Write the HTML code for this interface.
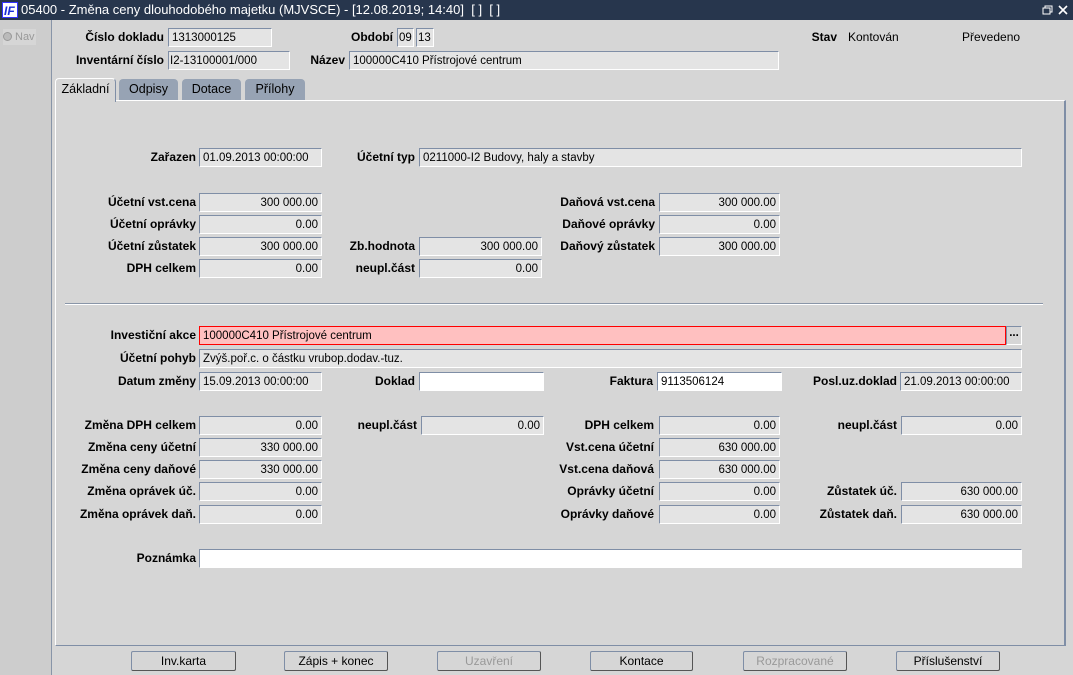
<!DOCTYPE html>
<html><head><meta charset="utf-8">
<style>
*{box-sizing:border-box;margin:0;padding:0}
body{width:1073px;height:675px;background:#d6d6d6;font-family:"Liberation Sans",Arial,sans-serif;font-size:12px;color:#000;position:relative;overflow:hidden}
.a{position:absolute}
.t{position:absolute;left:0;top:0;width:1073px;height:20px;background:#27364d;color:#fff;font-size:13px;line-height:20px}
.f{position:absolute;height:19px;background:#e4e4e4;border-top:1px solid #7f8ea6;border-left:1px solid #7f8ea6;border-right:1px solid #fff;border-bottom:1px solid #fff;line-height:18px;padding:0 3px;white-space:nowrap;overflow:hidden;font-size:11.5px}
.r{text-align:right}
.w{background:#fff}
.l{position:absolute;font-weight:bold;text-align:right;line-height:19px;white-space:nowrap}
.tab{position:absolute;top:79px;height:21px;background:#97a3b4;border-radius:4px 4px 0 0;font-size:12.5px;text-align:center;line-height:21px}
.b{position:absolute;top:651px;height:20px;border:1px solid #7f8ea6;border-right-color:#555;border-bottom-color:#555;background:#d6d6d6;text-align:center;line-height:18px;border-radius:2px}
.dis{color:#999}
</style></head><body>
<div class="t">
 <div class="a" style="left:2px;top:2px;width:16px;height:16px;background:#fff;border:1px solid #33f"><span style="color:#1a2fd8;font-weight:bold;font-style:italic;font-size:12px;position:absolute;left:1px;top:-2px">IF</span></div>
 <span class="a" style="left:21px;top:0">05400 - Změna ceny dlouhodobého majetku (MJVSCE) - [12.08.2019; 14:40]&nbsp; [ ]&nbsp; [ ]</span>
 <svg class="a" style="left:1042px;top:4px" width="28" height="12"><rect x="1" y="4" width="7" height="6" fill="none" stroke="#fff"/><path d="M3 4V2h7v6H8" fill="none" stroke="#fff"/><path d="M17 2l8 8M25 2l-8 8" stroke="#fff" stroke-width="1.6"/></svg>
</div>
<div class="a" style="left:0;top:20px;width:52px;height:655px;background:#cdcdcd;border-right:1px solid #8895a8"></div>
<div class="a" style="left:3px;top:29px;width:33px;height:16px;background:#d6d6d6;color:#999;font-size:11px;line-height:16px"><span style="display:inline-block;width:9px;height:9px;border-radius:50%;background:#bbb;border:1px solid #999;vertical-align:-1px;margin-right:3px"></span>Nav</div>

<div class="l" style="right:909px;top:28px">Číslo dokladu</div>
<div class="f" style="left:168px;top:28px;width:104px">1313000125</div>
<div class="l" style="right:680px;top:28px">Období</div>
<div class="f" style="left:397px;top:28px;width:17px;padding:0 1px">09</div>
<div class="f" style="left:416px;top:28px;width:18px;padding:0 1px">13</div>
<div class="l" style="right:236px;top:28px">Stav</div>
<div class="a" style="left:848px;top:28px;line-height:19px">Kontován</div>
<div class="a" style="left:962px;top:28px;line-height:19px">Převedeno</div>
<div class="l" style="right:909px;top:51px">Inventární číslo</div>
<div class="f" style="left:168px;top:51px;width:122px;padding-left:1px">I2-13100001/000</div>
<div class="l" style="right:728px;top:51px">Název</div>
<div class="f" style="left:349px;top:51px;width:430px">100000C410 Přístrojové centrum</div>

<div class="a" style="left:55px;top:100px;width:1011px;height:546px;border-top:1px solid #fff;border-left:1px solid #fff;border-right:2px solid #7f8ea6;border-bottom:1px solid #7f8ea6"></div>
<div class="tab" style="left:55px;top:78px;width:61px;height:24px;background:#d6d6d6;border:1px solid #fff;border-bottom:none;border-right-color:#7f8ea6">Základní</div>
<div class="tab" style="left:119px;width:59px">Odpisy</div>
<div class="tab" style="left:182px;width:59px">Dotace</div>
<div class="tab" style="left:245px;width:60px">Přílohy</div>

<div class="l" style="right:877px;top:148px">Zařazen</div>
<div class="f" style="left:199px;top:148px;width:123px">01.09.2013 00:00:00</div>
<div class="l" style="right:658px;top:148px">Účetní typ</div>
<div class="f" style="left:419px;top:148px;width:603px">0211000-I2 Budovy, haly a stavby</div>

<div class="l" style="right:877px;top:193px">Účetní vst.cena</div><div class="f r" style="left:199px;top:193px;width:123px">300 000.00</div>
<div class="l" style="right:877px;top:215px">Účetní oprávky</div><div class="f r" style="left:199px;top:215px;width:123px">0.00</div>
<div class="l" style="right:877px;top:237px">Účetní zůstatek</div><div class="f r" style="left:199px;top:237px;width:123px">300 000.00</div>
<div class="l" style="right:877px;top:259px">DPH celkem</div><div class="f r" style="left:199px;top:259px;width:123px">0.00</div>
<div class="l" style="right:658px;top:237px">Zb.hodnota</div><div class="f r" style="left:419px;top:237px;width:123px">300 000.00</div>
<div class="l" style="right:658px;top:259px">neupl.část</div><div class="f r" style="left:419px;top:259px;width:123px">0.00</div>
<div class="l" style="right:418px;top:193px">Daňová vst.cena</div><div class="f r" style="left:659px;top:193px;width:121px">300 000.00</div>
<div class="l" style="right:418px;top:215px">Daňové oprávky</div><div class="f r" style="left:659px;top:215px;width:121px">0.00</div>
<div class="l" style="right:418px;top:237px">Daňový zůstatek</div><div class="f r" style="left:659px;top:237px;width:121px">300 000.00</div>

<div class="a" style="left:65px;top:303px;width:978px;height:2px;border-top:1px solid #8a96a8;border-bottom:1px solid #fff"></div>

<div class="l" style="right:877px;top:326px">Investiční akce</div>
<div class="f" style="left:199px;top:326px;width:807px;background:#ffc0c0;border:1px solid #f00">100000C410 Přístrojové centrum</div>
<div class="f" style="left:1006px;top:326px;width:16px;padding:0;text-align:center;background:#d6d6d6;font-weight:bold;line-height:12px">...</div>
<div class="l" style="right:877px;top:349px">Účetní pohyb</div>
<div class="f" style="left:199px;top:349px;width:823px">Zvýš.poř.c. o částku vrubop.dodav.-tuz.</div>
<div class="l" style="right:877px;top:372px">Datum změny</div><div class="f" style="left:199px;top:372px;width:123px">15.09.2013 00:00:00</div>
<div class="l" style="right:658px;top:372px">Doklad</div><div class="f w" style="left:419px;top:372px;width:125px"></div>
<div class="l" style="right:420px;top:372px">Faktura</div><div class="f w" style="left:657px;top:372px;width:125px">9113506124</div>
<div class="l" style="right:176px;top:372px">Posl.uz.doklad</div><div class="f" style="left:900px;top:372px;width:122px">21.09.2013 00:00:00</div>

<div class="l" style="right:877px;top:416px">Změna DPH celkem</div><div class="f r" style="left:199px;top:416px;width:123px">0.00</div>
<div class="l" style="right:877px;top:438px">Změna ceny účetní</div><div class="f r" style="left:199px;top:438px;width:123px">330 000.00</div>
<div class="l" style="right:877px;top:460px">Změna ceny daňové</div><div class="f r" style="left:199px;top:460px;width:123px">330 000.00</div>
<div class="l" style="right:877px;top:482px">Změna oprávek úč.</div><div class="f r" style="left:199px;top:482px;width:123px">0.00</div>
<div class="l" style="right:877px;top:505px">Změna oprávek daň.</div><div class="f r" style="left:199px;top:505px;width:123px">0.00</div>
<div class="l" style="right:656px;top:416px">neupl.část</div><div class="f r" style="left:421px;top:416px;width:123px">0.00</div>
<div class="l" style="right:419px;top:416px">DPH celkem</div><div class="f r" style="left:659px;top:416px;width:121px">0.00</div>
<div class="l" style="right:419px;top:438px">Vst.cena účetní</div><div class="f r" style="left:659px;top:438px;width:121px">630 000.00</div>
<div class="l" style="right:419px;top:460px">Vst.cena daňová</div><div class="f r" style="left:659px;top:460px;width:121px">630 000.00</div>
<div class="l" style="right:419px;top:482px">Oprávky účetní</div><div class="f r" style="left:659px;top:482px;width:121px">0.00</div>
<div class="l" style="right:419px;top:505px">Oprávky daňové</div><div class="f r" style="left:659px;top:505px;width:121px">0.00</div>
<div class="l" style="right:176px;top:416px">neupl.část</div><div class="f r" style="left:901px;top:416px;width:121px">0.00</div>
<div class="l" style="right:176px;top:482px">Zůstatek úč.</div><div class="f r" style="left:901px;top:482px;width:121px">630 000.00</div>
<div class="l" style="right:176px;top:505px">Zůstatek daň.</div><div class="f r" style="left:901px;top:505px;width:121px">630 000.00</div>

<div class="l" style="right:877px;top:549px">Poznámka</div>
<div class="f w" style="left:199px;top:549px;width:823px"></div>

<div class="b" style="left:131px;width:105px">Inv.karta</div>
<div class="b" style="left:284px;width:104px">Zápis + konec</div>
<div class="b dis" style="left:437px;width:104px">Uzavření</div>
<div class="b" style="left:590px;width:103px">Kontace</div>
<div class="b dis" style="left:743px;width:104px">Rozpracované</div>
<div class="b" style="left:896px;width:104px">Příslušenství</div>
</body></html>
